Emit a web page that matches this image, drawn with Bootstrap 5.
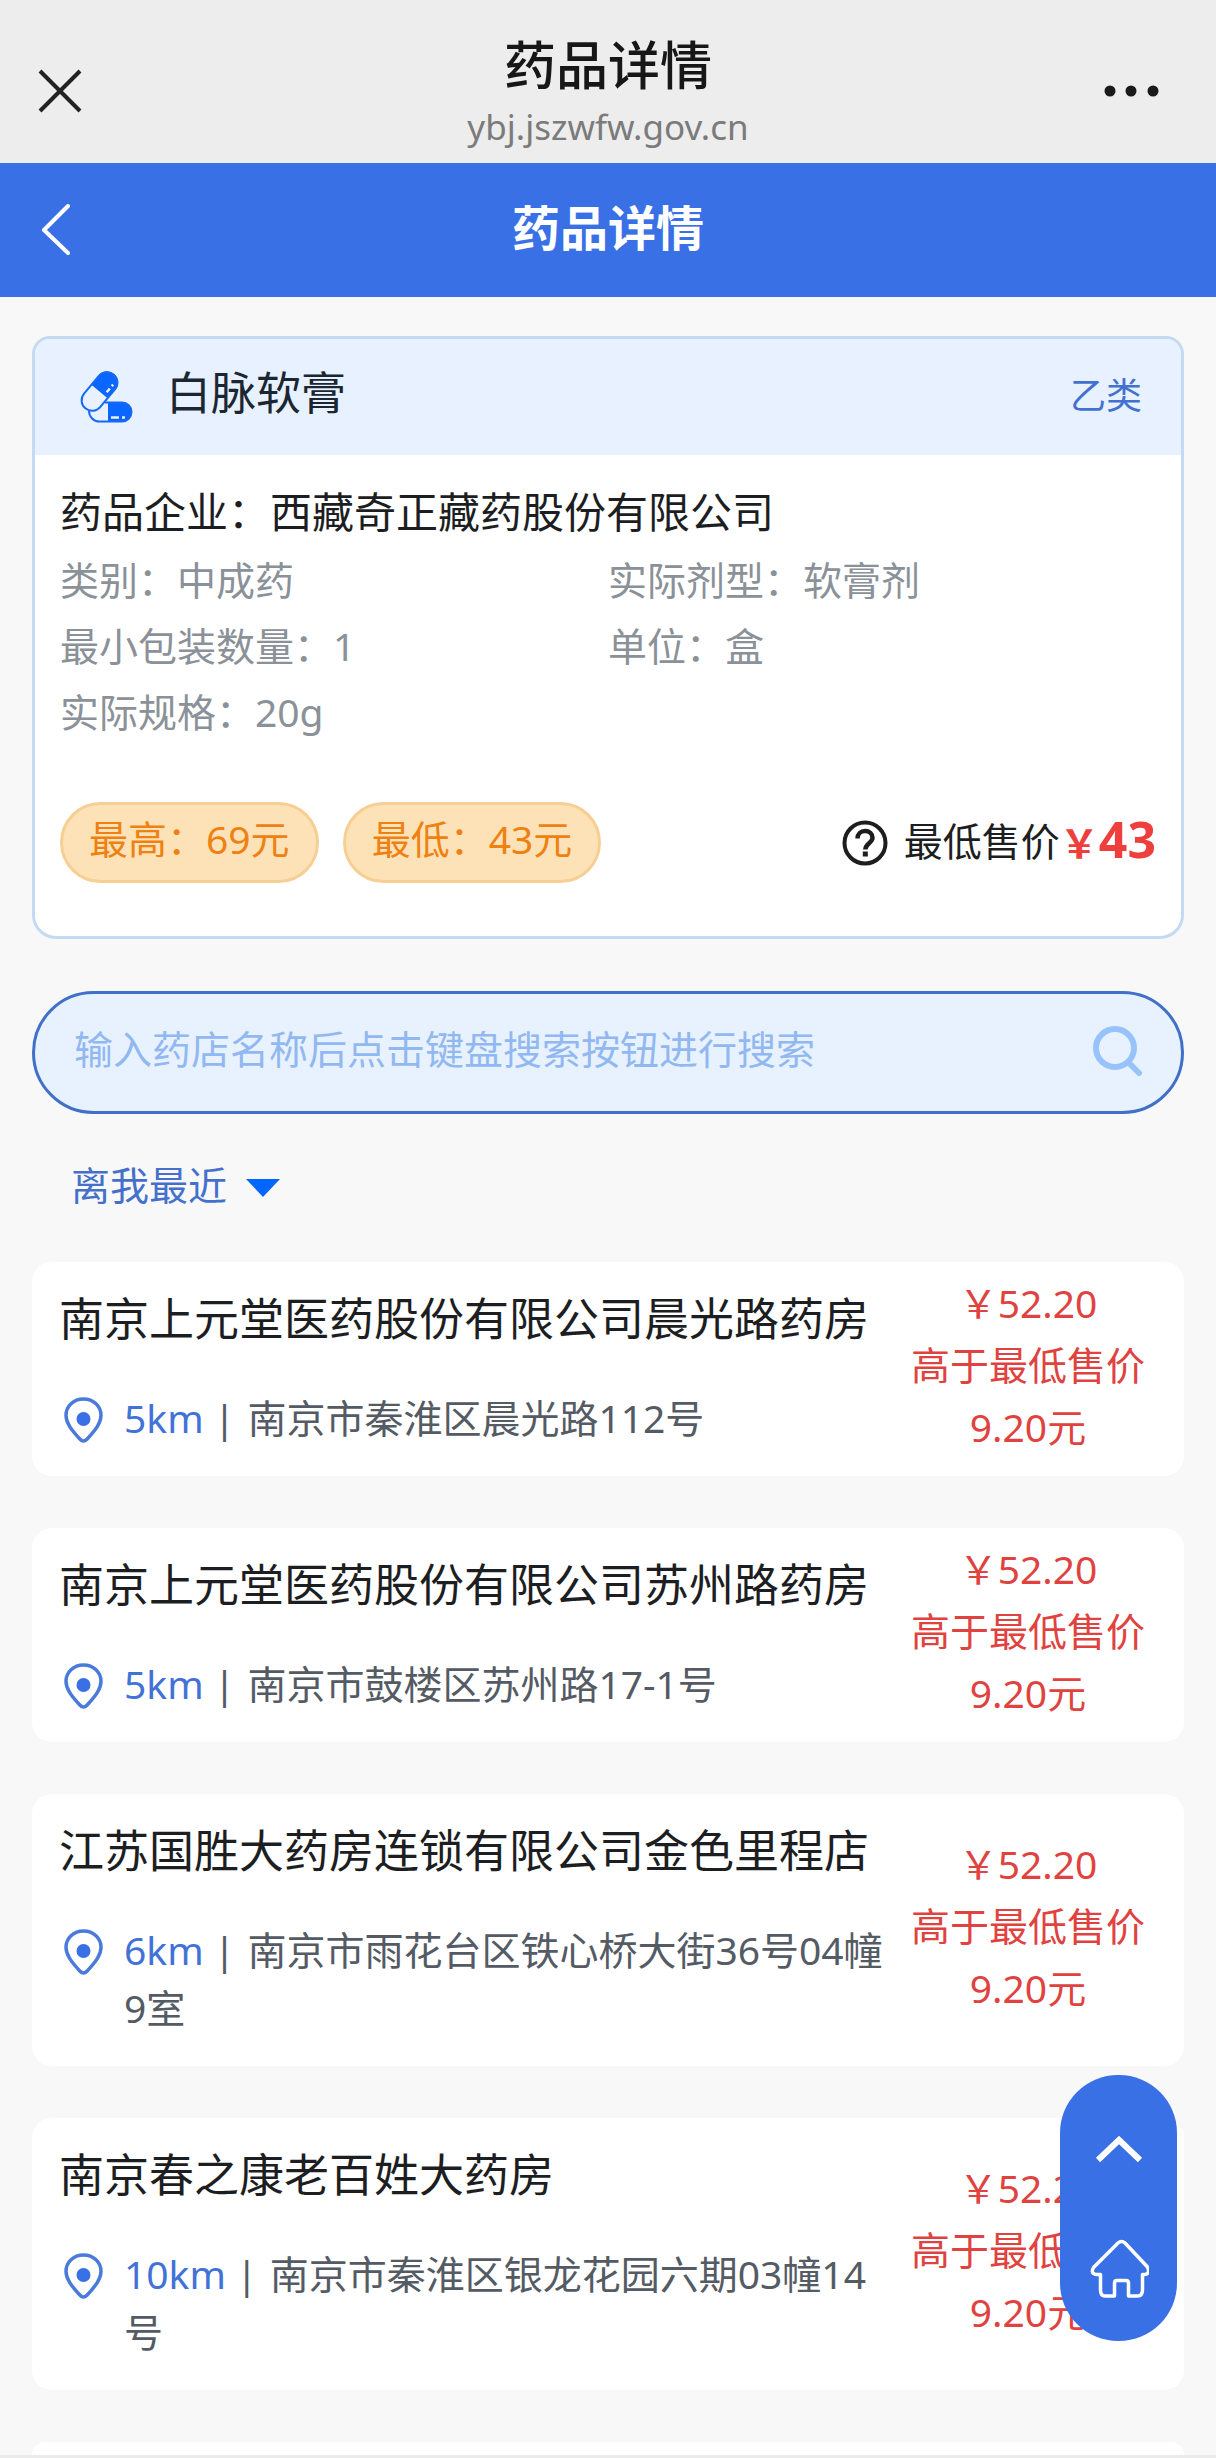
<!DOCTYPE html>
<html lang="zh-CN">
<head>
<meta charset="utf-8">
<meta name="viewport" content="width=device-width, initial-scale=1">
<title>药品详情</title>
<link href="https://cdn.jsdelivr.net/npm/bootstrap@5.3.0/dist/css/bootstrap.min.css" rel="stylesheet">
<style>
  :root { --brand: #3a70e6; --sub: 39px; --title: 45px; }
  body {
    font-family: "Noto Sans", "Noto Sans CJK SC", sans-serif;
    font-size: var(--sub); line-height: 58px; color: #1d1e22; background: #f8f8f8;
  }
  svg { display: block; flex: none; }
  button.plain { display: block; background: none; border: 0; padding: 0; line-height: 1; }
  /* browser bar */
  .browser-bar { background: #ededed; padding: 34px 36px 12px; }
  .browser-title { font-size: 52px; line-height: 62px; color: #171717; font-weight: 500; margin-bottom: 7px; }
  .browser-url { font-size: 35px; line-height: 48px; color: #7b7b7b; }
  .side { width: 100px; }
  /* page bar */
  .page-bar { background: var(--brand); padding: 29px 36px 33px; }
  .page-bar h1 { font-size: 48px; line-height: 72px; font-weight: 700; }
  .page-body { padding: 39px 32px 0; }
  /* medicine card */
  .drug { border: 3px solid #c3daf2; border-radius: 18px 18px 24px 24px; background: #fff; overflow: hidden; }
  .drug-head { background: #e7f1ff; padding: 0 39px 0 45px; line-height: 116px; }
  .drug-name { font-size: var(--title); line-height: 108px; padding-bottom: 8px; color: #1b2630; font-weight: 400; }
  .drug-class { font-size: 36px; line-height: 114px; padding-bottom: 2px; color: #4470d0; }
  .drug-body { padding: 22px 25px 53px; }
  .maker { font-size: 42px; line-height: 70px; }
  .facts { line-height: 66px; color: #8b9198; }
  .price-tag { border: 3px solid #f6cf94; border-radius: 41px; background: #fee2b7; color: #ee8111; line-height: 67px; padding: 0 26px 8px; }
  .tag-row { margin-top: 57px; }
  .low-price { color: #ee3f3d; font-weight: 700; }
  .low-price .amount { font-size: 50px; }
  /* search */
  .search { border: 3px solid #4170c8; border-radius: 62px; background: #e8f2fe; padding: 0 37px 0 39px; margin-top: 52px; }
  .search input { background: none; border: 0; outline: 0; font-size: var(--sub); line-height: 58px; height: 117px; padding: 0 0 8px; color: #2d62c9; }
  .search input::placeholder { color: #92b8f1; opacity: 1; }
  /* sorting */
  .sort { margin: 41px 39px 47px; line-height: 60px; color: #4470cc; }
  .sort select { appearance: none; background: none; border: 0; padding: 0; color: inherit; font-size: var(--sub); line-height: 60px; }
  .sort svg { margin: 6px 0 0 18px; }
  /* shops */
  .shops { gap: 52px; }
  .shop { background: #fff; border-radius: 20px; padding: 0 28px 0 27px; }
  .shop-info { padding: 29px 0; }
  .shop h2 { font-size: var(--title); line-height: 56px; margin-bottom: 42px; font-weight: 400; }
  .address { color: #545b64; }
  .address b { font-weight: 400; color: #4272d8; }
  .bar { margin-right: 2px; }
  .pin { margin: 8px 21px 0 5px; }
  .gap-price { width: 256px; line-height: 62px; color: #e0433f; padding-bottom: 8px; }
  .shop-next { background: #fff; height: 13px; border-radius: 13px 13px 0 0; }
  .page-end { height: 4px; background: #ebebeb; }
  /* floating tools */
  .tools { position: fixed; right: 39px; bottom: 117px; width: 117px; padding: 60px 0 43px; border-radius: 58px; background: var(--brand); gap: 76px; }
</style>
</head>
<body>
<header class="browser-bar d-flex align-items-center justify-content-between">
  <div class="side mb-1">
    <button type="button" class="plain" aria-label="关闭">
      <svg width="48" height="48" viewBox="0 0 48 48" fill="none" stroke="#222" stroke-width="4"><path d="M4 4l40 40M44 4L4 44"/></svg>
    </button>
  </div>
  <div class="text-center">
    <div class="browser-title">药品详情</div>
    <div class="browser-url">ybj.jszwfw.gov.cn</div>
  </div>
  <div class="side mb-1 d-flex justify-content-end">
    <button type="button" class="plain" aria-label="更多">
      <svg width="76" height="48" viewBox="0 0 76 48" fill="#1a1a1a"><circle cx="6" cy="24" r="5.500"/><circle cx="27" cy="24" r="5.500"/><circle cx="49" cy="24" r="5.500"/></svg>
    </button>
  </div>
</header>

<nav class="page-bar d-flex align-items-center justify-content-between text-white">
  <div class="side">
    <button type="button" class="plain" aria-label="返回">
      <svg width="40" height="54" viewBox="0 0 40 54" fill="none" stroke="#fff" stroke-width="4" stroke-linecap="round" stroke-linejoin="round"><path d="M32 5L8 29l24 23"/></svg>
    </button>
  </div>
  <h1 class="mb-0">药品详情</h1>
  <div class="side"></div>
</nav>

<main class="page-body">
  <section class="drug">
    <div class="drug-head d-flex align-items-center">
      <svg width="54" height="56" viewBox="1 0 54 56" fill="none">
        <path d="M29 33h14a10 10 0 0 1 0 20H29z" fill="#0a66ff"/>
        <path d="M26 33.500h17a9.500 9.500 0 0 1 0 19H20.500A10.500 10.500 0 0 1 10 42" stroke="#1769f5" stroke-width="2"/>
        <path d="M32 48.500h8M43 48.500h3" stroke="#e7f1ff" stroke-width="2.500"/>
        <g transform="translate(20.500 22.500) rotate(40)">
          <path d="M-11 0v-12a11 11 0 0 1 22 0v12z" fill="#0a66ff"/>
          <rect x="-10.500" y="-22" width="21" height="44" rx="10.500" stroke="#1769f5" stroke-width="2"/>
          <path d="M6-4v-5M6-12v-2" stroke="#e7f1ff" stroke-width="2.500"/>
        </g>
      </svg>
      <h2 class="drug-name mb-0 ms-4 ps-2">白脉软膏</h2>
      <span class="drug-class ms-auto">乙类</span>
    </div>
    <div class="drug-body">
      <div class="maker">药品企业：西藏奇正藏药股份有限公司</div>
      <div class="row g-0 facts">
        <div class="col-6">类别：中成药</div>
        <div class="col-6">实际剂型：软膏剂</div>
        <div class="col-6">最小包装数量：1</div>
        <div class="col-6">单位：盒</div>
        <div class="col-6">实际规格：20g</div>
      </div>
      <div class="tag-row d-flex align-items-center">
        <span class="price-tag me-4">最高：69元</span>
        <span class="price-tag">最低：43元</span>
        <div class="ms-auto d-flex align-items-center">
          <button type="button" class="plain me-3" aria-label="价格说明">
            <svg width="46" height="46" viewBox="0 0 46 46" fill="none" stroke="#1d1d1f" stroke-width="4"><circle cx="23" cy="23" r="20.500"/><path d="M15.500 18.500c0-4.500 3.200-7.500 7.500-7.500s7.500 2.800 7.500 6.800c0 5.200-7.200 5.700-7.200 11.700" stroke-width="4.500"/><path d="M23.300 31.500v5" stroke-width="5"/></svg>
          </button>
          <span class="pb-1">最低售价</span>
          <span class="low-price pb-1">￥<span class="amount">43</span></span>
        </div>
      </div>
    </div>
  </section>

  <form class="search d-flex align-items-center" role="search">
    <input type="search" class="flex-grow-1" aria-label="搜索药店" placeholder="输入药店名称后点击键盘搜索按钮进行搜索">
    <button type="button" class="plain pb-1" aria-label="搜索">
      <svg width="52" height="52" viewBox="0 0 52 52" fill="none" stroke="#98c3fa" stroke-width="6" stroke-linecap="round"><circle cx="23" cy="23" r="19"/><path d="M36.500 37.500L47 48"/></svg>
    </button>
  </form>

  <label class="sort d-flex align-items-center">
    <select aria-label="排序方式"><option>离我最近</option></select>
    <svg width="34" height="18" viewBox="0 0 34 18"><path d="M0 0h34L17 18z" fill="#0066ff"/></svg>
  </label>

  <div class="shops d-flex flex-column">
    <article class="shop d-flex align-items-center">
      <div class="shop-info flex-grow-1">
        <h2>南京上元堂医药股份有限公司晨光路药房</h2>
        <div class="d-flex align-items-start">
          <svg class="pin" width="39" height="46" viewBox="0 0 39 46"><path d="M19.500 2C9.500 2 2 9.300 2 18.300c0 7.500 5 14.200 13.800 23.700 2.600 2.700 4.800 2.700 7.400 0C32 32.500 37 25.800 37 18.300 37 9.300 29.500 2 19.500 2z" fill="none" stroke="#4a7ada" stroke-width="3.500"/><circle cx="19.500" cy="22" r="7" fill="#3a70e6"/></svg>
          <div class="address"><b>5km</b> <span class="bar">|</span> 南京市秦淮区晨光路112号</div>
        </div>
      </div>
      <div class="gap-price text-center flex-shrink-0">￥52.20<br>高于最低售价<br>9.20元</div>
    </article>

    <article class="shop d-flex align-items-center">
      <div class="shop-info flex-grow-1">
        <h2>南京上元堂医药股份有限公司苏州路药房</h2>
        <div class="d-flex align-items-start">
          <svg class="pin" width="39" height="46" viewBox="0 0 39 46"><path d="M19.500 2C9.500 2 2 9.300 2 18.300c0 7.500 5 14.200 13.800 23.700 2.600 2.700 4.800 2.700 7.400 0C32 32.500 37 25.800 37 18.300 37 9.300 29.500 2 19.500 2z" fill="none" stroke="#4a7ada" stroke-width="3.500"/><circle cx="19.500" cy="22" r="7" fill="#3a70e6"/></svg>
          <div class="address"><b>5km</b> <span class="bar">|</span> 南京市鼓楼区苏州路17-1号</div>
        </div>
      </div>
      <div class="gap-price text-center flex-shrink-0">￥52.20<br>高于最低售价<br>9.20元</div>
    </article>

    <article class="shop d-flex align-items-center">
      <div class="shop-info flex-grow-1">
        <h2>江苏国胜大药房连锁有限公司金色里程店</h2>
        <div class="d-flex align-items-start">
          <svg class="pin" width="39" height="46" viewBox="0 0 39 46"><path d="M19.500 2C9.500 2 2 9.300 2 18.300c0 7.500 5 14.200 13.800 23.700 2.600 2.700 4.800 2.700 7.400 0C32 32.500 37 25.800 37 18.300 37 9.300 29.500 2 19.500 2z" fill="none" stroke="#4a7ada" stroke-width="3.500"/><circle cx="19.500" cy="22" r="7" fill="#3a70e6"/></svg>
          <div class="address"><b>6km</b> <span class="bar">|</span> 南京市雨花台区铁心桥大街36号04幢9室</div>
        </div>
      </div>
      <div class="gap-price text-center flex-shrink-0">￥52.20<br>高于最低售价<br>9.20元</div>
    </article>

    <article class="shop d-flex align-items-center">
      <div class="shop-info flex-grow-1">
        <h2>南京春之康老百姓大药房</h2>
        <div class="d-flex align-items-start">
          <svg class="pin" width="39" height="46" viewBox="0 0 39 46"><path d="M19.500 2C9.500 2 2 9.300 2 18.300c0 7.500 5 14.200 13.800 23.700 2.600 2.700 4.800 2.700 7.400 0C32 32.500 37 25.800 37 18.300 37 9.300 29.500 2 19.500 2z" fill="none" stroke="#4a7ada" stroke-width="3.500"/><circle cx="19.500" cy="22" r="7" fill="#3a70e6"/></svg>
          <div class="address"><b>10km</b> <span class="bar">|</span> 南京市秦淮区银龙花园六期03幢14号</div>
        </div>
      </div>
      <div class="gap-price text-center flex-shrink-0">￥52.20<br>高于最低售价<br>9.20元</div>
    </article>

    <div class="shop-next"></div>
  </div>
</main>
<div class="page-end"></div>

<div class="tools d-flex flex-column align-items-center">
  <button type="button" class="plain" aria-label="回到顶部">
    <svg width="48" height="28" viewBox="0 0 48 28" fill="none" stroke="#fff" stroke-width="6"><path d="M3 25L24 5l21 20"/></svg>
  </button>
  <a href="#" aria-label="首页">
    <svg width="60" height="59" viewBox="0 0 60 59" fill="none" stroke="#fff" stroke-width="3.500" stroke-linejoin="round"><path d="M29 4q3.500-3 7 0L58.500 28q3 7-3 7.500H53.500V51q0 6-5 6H39.500V44q0-2.500-2.500-2.500h-9q-2.500 0-2.500 2.500v13H16q-4.500 0-4.500-6V35.500H8q-7-.5-3.500-7z"/></svg>
  </a>
</div>
<script src="https://cdn.jsdelivr.net/npm/bootstrap@5.3.0/dist/js/bootstrap.bundle.min.js"></script>
</body>
</html>
